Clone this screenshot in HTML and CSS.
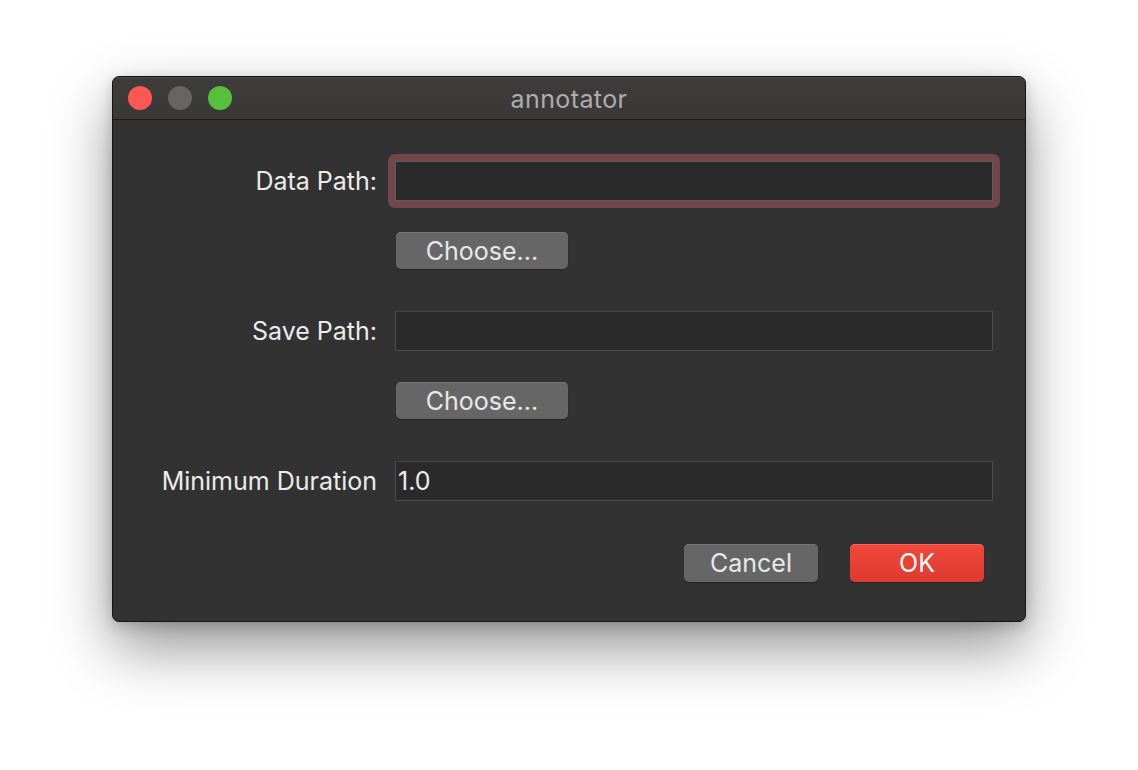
FILE: index.html
```html
<!DOCTYPE html>
<html>
<head>
<meta charset="utf-8">
<title>annotator</title>
<link rel="stylesheet" href="styles.css">
</head>
<body>
<div class="stage">
  <div class="window">
    <div class="titlebar">
      <div class="lights">
        <span class="light red"></span>
        <span class="light gray"></span>
        <span class="light green"></span>
      </div>
      <div class="title">annotator</div>
      <div></div>
    </div>
    <div class="content">
      <div class="row row-field">
        <label class="label">Data Path:</label>
        <div class="focus-ring"><div class="field"></div></div>
      </div>
      <div class="row row-btn">
        <button class="btn choose">Choose...</button>
      </div>
      <div class="row row-field">
        <label class="label">Save Path:</label>
        <div class="field"></div>
      </div>
      <div class="row row-btn">
        <button class="btn choose">Choose...</button>
      </div>
      <div class="row row-field last">
        <label class="label">Minimum Duration</label>
        <div class="field">1.0</div>
      </div>
      <div class="footer">
        <button class="btn cancel">Cancel</button>
        <button class="btn ok">OK</button>
      </div>
    </div>
  </div>
</div>
</body>
</html>
```

FILE: styles.css
```css
html, body {
  margin: 0;
  padding: 0;
  background: #ffffff;
}
body {
  font-family: Inter, "Liberation Sans", sans-serif;
  min-height: 770px;
}
.stage {
  display: flex;
  align-items: flex-start;
  min-height: 770px;
  box-sizing: border-box;
  padding: 76px 0 0 112px;
}
.window {
  width: 914px;
  height: 546px;
  box-sizing: border-box;
  border: 1px solid #141414;
  border-radius: 7px;
  background: #323232;
  overflow: hidden;
  display: flex;
  flex-direction: column;
  box-shadow: 0 26px 60px rgba(0, 0, 0, 0.42), 0 4px 14px rgba(0, 0, 0, 0.18);
}
.titlebar {
  height: 42px;
  border-bottom: 1px solid #1d1d1d;
  background: linear-gradient(#3e3d3c, #393837);
  box-shadow: inset 0 1px 0 #4a4948;
  display: grid;
  grid-template-columns: 1fr auto 1fr;
  align-items: center;
}
.lights {
  display: flex;
  gap: 16px;
  padding-left: 15px;
}
.light {
  width: 24px;
  height: 24px;
  border-radius: 50%;
}
.red { background: #fc5753; }
.gray { background: #666565; }
.green { background: #56c03a; }
.title {
  color: #adadad;
  font-size: 25px;
  letter-spacing: 0.4px;
  padding-top: 2px;
}
.content {
  padding-top: 41px;
  display: flex;
  flex-direction: column;
}
.row {
  display: flex;
  align-items: center;
}
.row-field {
  height: 40px;
  margin-bottom: 31px;
}
.row-field.last {
  margin-bottom: 43px;
}
.row-btn {
  padding-left: 283px;
  margin-bottom: 42px;
}
.label {
  width: 264px;
  margin-right: 18px;
  text-align: right;
  color: #ebebeb;
  font-size: 25px;
  white-space: nowrap;
}
.field {
  width: 598px;
  height: 40px;
  box-sizing: border-box;
  background: #2a2a2a;
  border: 1px solid #4c4c4c;
  border-top-color: #444444;
  color: #ececec;
  font-size: 25px;
  line-height: 38px;
  padding-left: 2px;
}
.focus-ring {
  margin: -7px;
  padding: 7px;
  border-radius: 7px;
  background: #714749;
}
.focus-ring .field {
  border-color: #5e5e5e;
}
.btn {
  font-family: inherit;
  font-size: 25px;
  border: none;
  border-radius: 5px;
  padding: 0;
  color: #e8e8e8;
  background: #666666;
  box-shadow: inset 0 1px 0 #747474, 0 1px 1px rgba(0, 0, 0, 0.25);
}
.choose {
  width: 172px;
  height: 37px;
}
.footer {
  display: flex;
  justify-content: flex-end;
  gap: 32px;
  padding-right: 41px;
}
.cancel, .ok {
  width: 134px;
  height: 38px;
}
.ok {
  color: #ffffff;
  background: linear-gradient(#f4473b, #dd3a30);
  box-shadow: inset 0 1px 0 #f7685d, 0 1px 1px rgba(0, 0, 0, 0.25);
}
```
